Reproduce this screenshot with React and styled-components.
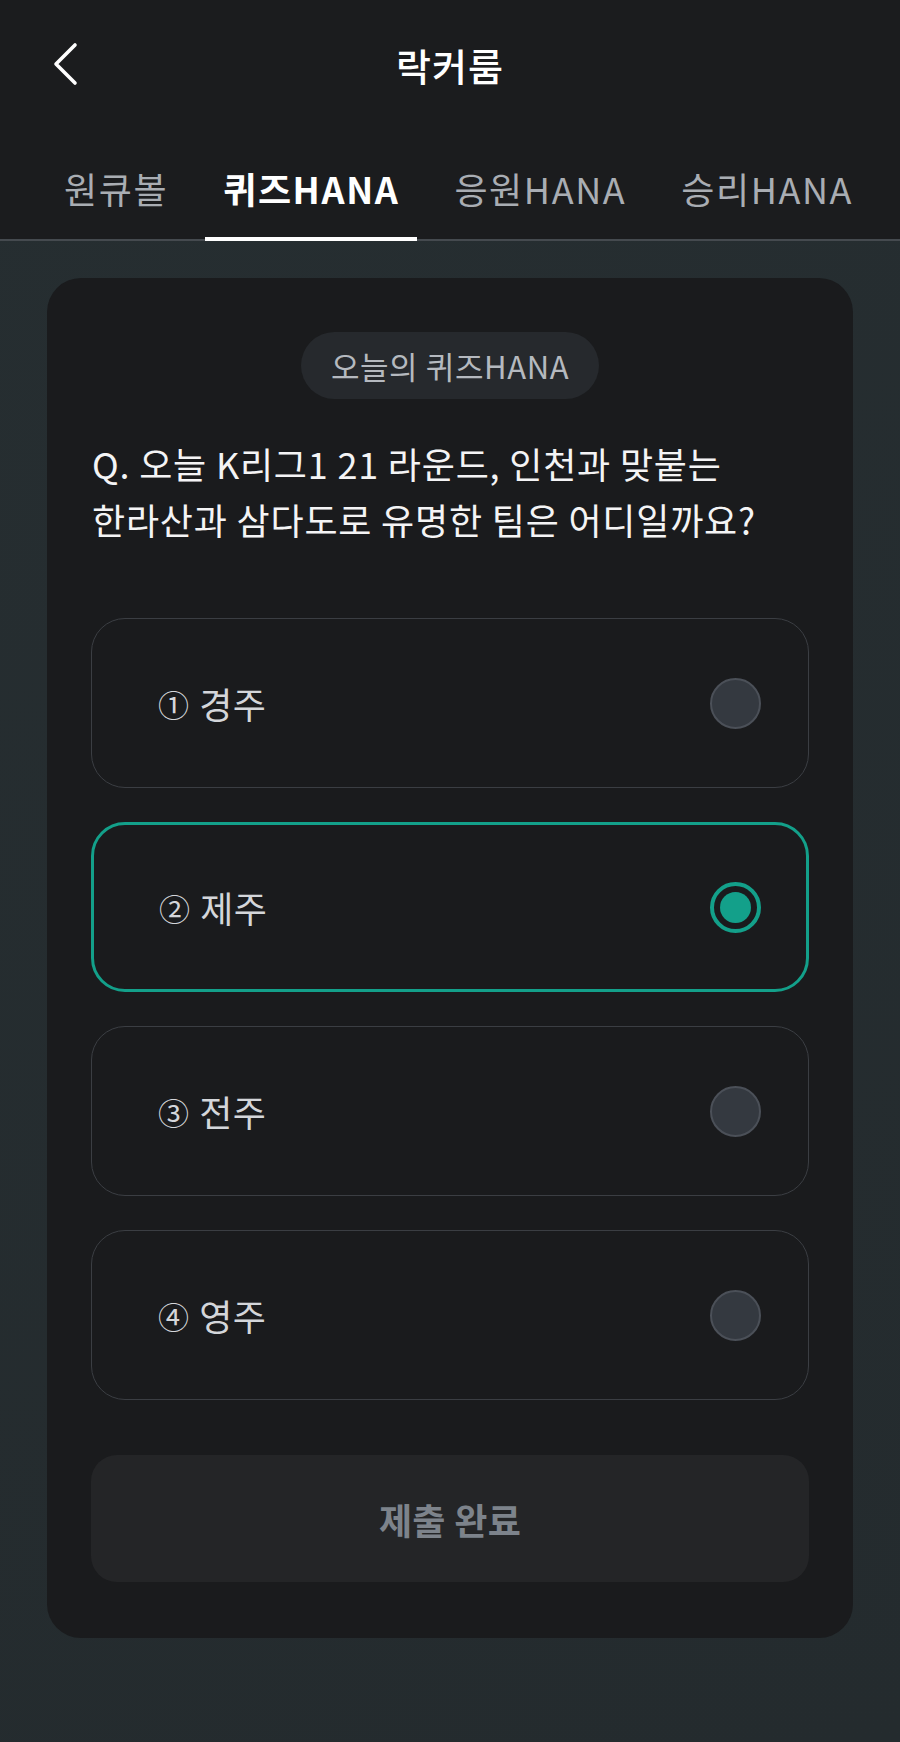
import styled, { createGlobalStyle } from "styled-components";

const options = [
  { id: 1, mark: "①", label: "경주" },
  { id: 2, mark: "②", label: "제주" },
  { id: 3, mark: "③", label: "전주" },
  { id: 4, mark: "④", label: "영주" },
];

const tabs = ["원큐볼", "퀴즈HANA", "응원HANA", "승리HANA"];

const App = () => {
  const selected = 2;
  const activeTab = 1;
  return (
    <Page>
      <GlobalStyle />
      <Header>
        <TopBar>
          <BackButton aria-label="back">
            <svg width="30" height="44" viewBox="0 0 30 44">
              <polyline
                points="25,3 6,22 25,41"
                fill="none"
                stroke="#ffffff"
                strokeWidth="3.6"
                strokeLinecap="round"
                strokeLinejoin="round"
              />
            </svg>
          </BackButton>
          <Title>락커룸</Title>
        </TopBar>
        <TabBar>
          {tabs.map((t, i) => (
            <Tab key={t} $active={i === activeTab}>
              {t}
            </Tab>
          ))}
        </TabBar>
      </Header>

      <Body>
        <Card>
          <PillRow>
            <Pill>오늘의 퀴즈HANA</Pill>
          </PillRow>
          <Question>
            Q. 오늘 K리그1 21 라운드, 인천과 맞붙는
            <br />
            한라산과 삼다도로 유명한 팀은 어디일까요?
          </Question>
          <OptionList>
            {options.map((o) => (
              <Option key={o.id} $selected={o.id === selected}>
                <OptionLabel>
                  <Mark>{o.mark}</Mark>
                  {o.label}
                </OptionLabel>
                <Radio $selected={o.id === selected} />
              </Option>
            ))}
          </OptionList>
          <SubmitButton>제출 완료</SubmitButton>
        </Card>
      </Body>
    </Page>
  );
};

export default App;

const GlobalStyle = createGlobalStyle`
  html, body {
    margin: 0;
    padding: 0;
    background: #252d30;
  }
  * {
    box-sizing: border-box;
  }
  body {
    font-family: "Noto Sans CJK KR", "Noto Sans", sans-serif;
  }
`;

const Page = styled.div`
  width: 900px;
  min-height: 1742px;
  display: flex;
  flex-direction: column;
  background: linear-gradient(160deg, #262e31 0%, #242b2e 100%);
`;

const Header = styled.div`
  background: #1b1c1e;
  border-bottom: 2px solid #454a4f;
`;

const TopBar = styled.div`
  position: relative;
  height: 128px;
  display: flex;
  justify-content: center;
  align-items: center;
`;

const BackButton = styled.button`
  position: absolute;
  left: 50px;
  top: 42px;
  background: none;
  border: none;
  padding: 0;
  display: flex;
`;

const Title = styled.h1`
  margin: 0;
  font-size: 38px;
  font-weight: 500;
  color: #ffffff;
  letter-spacing: 1px;
`;

const TabBar = styled.div`
  display: flex;
  gap: 19px;
  padding-left: 46px;
  height: 111px;
`;

const Tab = styled.div`
  padding: 10px 18px 0;
  display: flex;
  align-items: center;
  font-size: 36px;
  font-weight: ${(p) => (p.$active ? 700 : 400)};
  color: ${(p) => (p.$active ? "#ffffff" : "#a9adb3")};
  letter-spacing: 1.6px;
  border-bottom: 4px solid ${(p) => (p.$active ? "#ffffff" : "transparent")};
  margin-bottom: -2px;
`;

const Body = styled.div`
  padding: 37px 47px 103px;
`;

const Card = styled.div`
  background: #1a1b1d;
  border-radius: 34px;
  padding: 54px 44px 56px;
  display: flex;
  flex-direction: column;
`;

const PillRow = styled.div`
  display: flex;
  justify-content: center;
`;

const Pill = styled.div`
  height: 67px;
  padding: 0 30px;
  border-radius: 34px;
  background: #26292d;
  color: #b5b9bf;
  font-size: 31px;
  display: flex;
  align-items: center;
  letter-spacing: 0.6px;
`;

const Question = styled.p`
  margin: 36px 0 0;
  padding-left: 1px;
  color: #f4f4f5;
  font-size: 36px;
  line-height: 56px;
  font-weight: 400;
  letter-spacing: 0.8px;
`;

const OptionList = styled.div`
  display: flex;
  flex-direction: column;
  gap: 34px;
  margin-top: 71px;
`;

const Option = styled.div`
  height: 170px;
  border-radius: 34px;
  border: ${(p) => (p.$selected ? "3px solid #13a08a" : "1.5px solid #3b3e43")};
  display: flex;
  align-items: center;
  justify-content: space-between;
  padding: 0 ${(p) => (p.$selected ? "45px" : "47px")} 0
    ${(p) => (p.$selected ? "65px" : "66px")};
`;

const OptionLabel = styled.div`
  display: flex;
  align-items: center;
  gap: 10px;
  color: #d4d6da;
  font-size: 36px;
  letter-spacing: 0.3px;
`;

const Mark = styled.span`
  font-size: 31px;
`;

const Radio = styled.div`
  width: 51px;
  height: 51px;
  border-radius: 50%;
  border: ${(p) => (p.$selected ? "4px solid #13a08a" : "2.5px solid #4b5058")};
  background: ${(p) => (p.$selected ? "#1a1b1d" : "#343940")};
  display: flex;
  align-items: center;
  justify-content: center;

  &::after {
    content: "";
    display: ${(p) => (p.$selected ? "block" : "none")};
    width: 31px;
    height: 31px;
    border-radius: 50%;
    background: #13a08a;
  }
`;

const SubmitButton = styled.button`
  margin-top: 55px;
  height: 127px;
  border: none;
  border-radius: 26px;
  background: #242527;
  color: #7d838b;
  font-family: inherit;
  font-size: 36px;
  font-weight: 700;
  letter-spacing: 0.3px;
`;
